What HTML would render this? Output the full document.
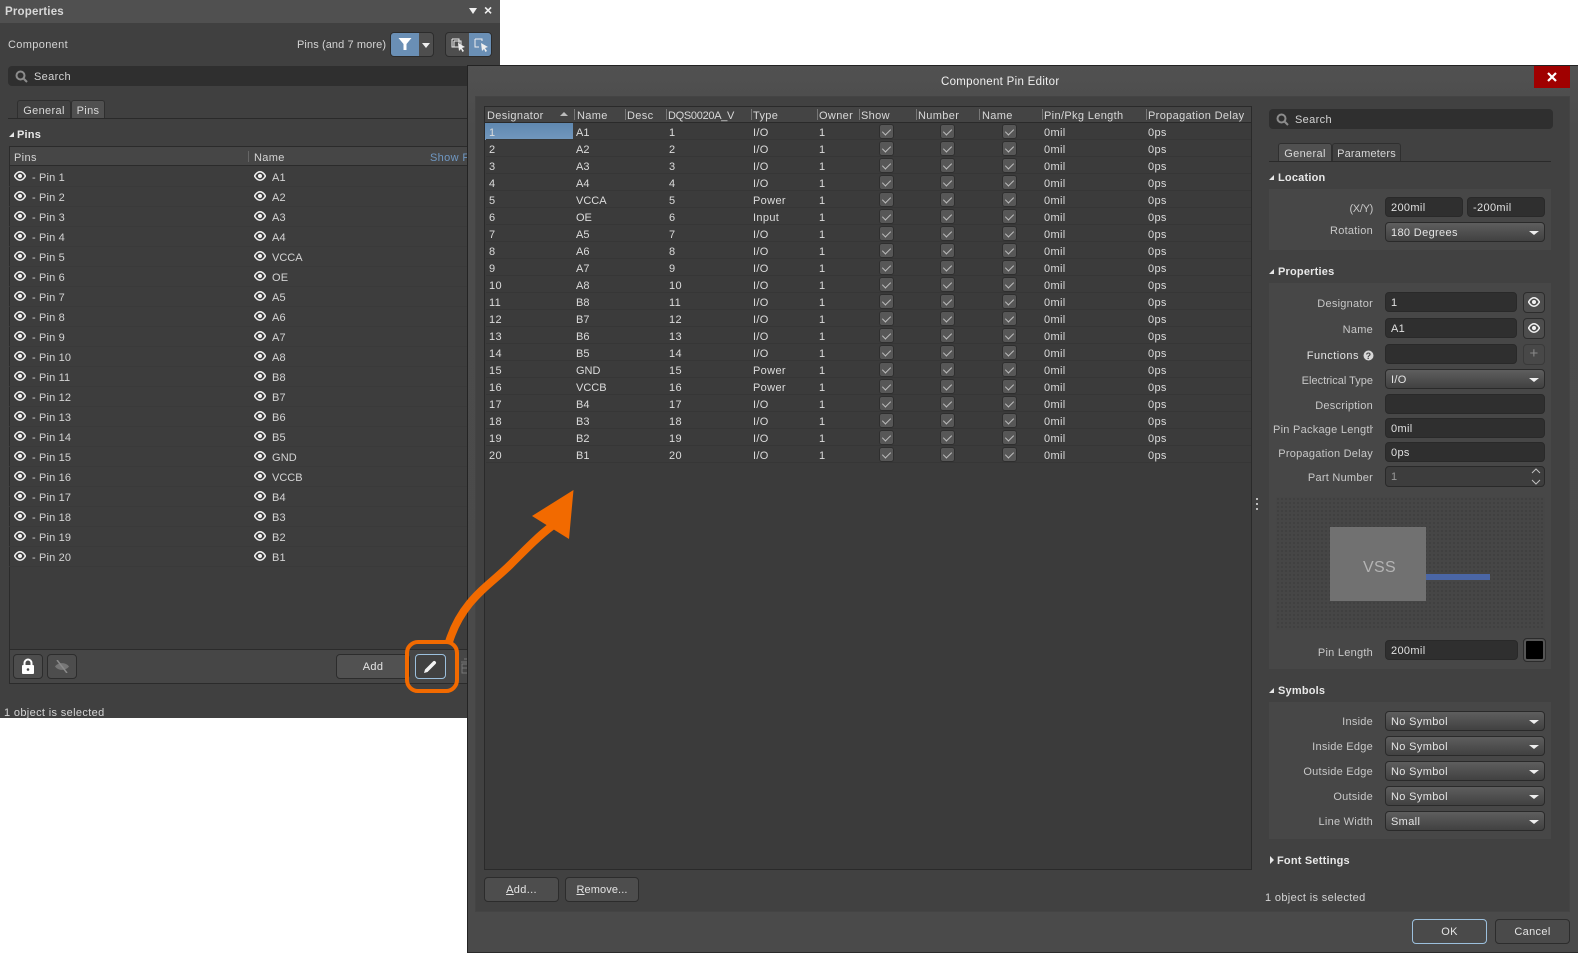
<!DOCTYPE html>
<html><head><meta charset="utf-8"><style>
*{box-sizing:border-box}
html,body{margin:0;padding:0;background:#fff}
body{width:1578px;height:953px;position:relative;overflow:hidden;font:11px "Liberation Sans",sans-serif;letter-spacing:.35px;color:#d4d4d4}
.a{position:absolute}
.tx{position:absolute;white-space:nowrap;line-height:14px;margin-top:1px}
.lb{position:absolute;white-space:nowrap;line-height:14px;right:205px;text-align:right;color:#c8c8c8;margin-top:1px;letter-spacing:.25px}
.b{font-weight:bold;color:#e8e8e8;letter-spacing:.2px}
.inp{position:absolute;background:#2f2f2f;border:1px solid #292929;border-radius:4px;height:20px;line-height:20px;padding-left:5px;color:#e0e0e0}
.dd{position:absolute;left:1385px;width:160px;height:20px;background:linear-gradient(#5e5e5e,#414141);border:1px solid #2a2a2a;border-radius:4px;line-height:21px;padding-left:5px;color:#e4e4e4}
.dd:after{content:"";position:absolute;right:5px;top:8px;border:5px solid transparent;border-top:4px solid #eee;border-bottom:0}
.btn{position:absolute;background:#4d4d4d;border:1px solid #2c2c2c;border-radius:4px;text-align:center;color:#e4e4e4}
.tab{position:absolute;border:1px solid #2f2f2f;border-bottom:0;border-radius:3px 3px 0 0;text-align:center;line-height:19px;color:#d8d8d8}
.tri{position:absolute;width:0;height:0;border-style:solid;border-width:0 0 5px 5px;border-color:transparent transparent #e6e6e6 transparent}
.lr{position:absolute;left:0;width:459px;height:20px;border-bottom:1px solid #3a3a3a}
.lr span{position:absolute;top:4px;line-height:14px;white-space:nowrap;color:#d4d4d4;letter-spacing:.15px}
.lr svg{position:absolute;top:4px;width:12px;height:10px}
.r{position:relative;height:17px;border-bottom:1px solid #363636}
.r span{position:absolute;top:3px;line-height:15px;white-space:nowrap;color:#dcdcdc}
.r .n0{left:3px}.r .n1{left:90px;letter-spacing:0}.r .n2{left:183px}.r .n3{left:267px}.r .n4{left:333px}.r .n5{left:558px}.r .n6{left:662px}
.r i{position:absolute;top:1px;width:15px;height:15px;background:#575757;border:1px solid #2e2e2e;border-radius:3px}
.r i:after{content:"";position:absolute;left:4px;top:2px;width:4px;height:7px;border:solid #bdbdbd;border-width:0 1px 1px 0;transform:rotate(45deg)}
.r .c1{left:393px}.r .c2{left:454px}.r .c3{left:516px}
.th{position:absolute;top:3px;line-height:15px;white-space:nowrap;color:#d8d8d8}
.sp{position:absolute;top:3px;width:1px;height:11px;background:#777}
</style></head><body>
<svg width="0" height="0" style="position:absolute"><defs>
<g id="eye"><path d="M.5 5C2.5 1.6 4.3.8 6 .8S9.5 1.6 11.5 5C9.5 8.4 7.7 9.2 6 9.2S2.5 8.4.5 5Z" fill="none" stroke="#f2f2f2" stroke-width="1.5"/><circle cx="6" cy="5" r="2" fill="#f2f2f2"/></g>
</defs></svg>

<!-- LEFT PANEL -->
<div class="a" style="left:0;top:0;width:500px;height:718px;background:#404040"></div>
<div class="a" style="left:0;top:0;width:500px;height:23px;background:#505050"></div>
<div class="tx b" style="left:5px;top:4px;font-size:11.500px;color:#d8d8d8">Properties</div>
<div class="a" style="left:469px;top:8px;border:4px solid transparent;border-top:6px solid #f0f0f0;border-bottom:0"></div>
<div class="tx" style="left:484px;top:2px;font-size:14px;font-weight:bold;color:#f0f0f0">×</div>
<div class="tx" style="left:8px;top:37px">Component</div>
<div class="tx" style="left:297px;top:37px;letter-spacing:.1px">Pins (and 7 more)</div>
<div class="a" style="left:390px;top:32px;width:44px;height:25px;background:#4e4e4e;border:1px solid #2c2c2c;border-radius:4px;overflow:hidden"><div class="a" style="left:0;top:0;width:28px;height:23px;background:#6a8fb5"></div>
<svg class="a" style="left:6px;top:4px" width="16" height="15"><path d="M1.500 1H14.500L9.500 7V13L6.500 13V7Z" fill="#fff"/></svg>
<div class="a" style="left:31px;top:10px;border:4px solid transparent;border-top:5px solid #eee;border-bottom:0"></div></div>
<div class="a" style="left:445px;top:32px;width:47px;height:25px;background:#4e4e4e;border:1px solid #2c2c2c;border-radius:4px;overflow:hidden"><div class="a" style="left:23px;top:0;width:23px;height:23px;background:#6a8fb5"></div>
<svg class="a" style="left:5px;top:5px" width="16" height="15"><path d="M1 1H8V3H10V9M3 3H8V9H1V1M3 3V9" fill="none" stroke="#eee"/><path d="M7 5L14 9L11 10L13 13L11.500 14L10 11L8 13Z" fill="#eee"/></svg>
<svg class="a" style="left:28px;top:5px" width="16" height="15"><path d="M1 1H8V3M1 1V9H5" fill="none" stroke="#eee"/><path d="M7 5L14 9L11 10L13 13L11.500 14L10 11L8 13Z" fill="#eee"/></svg></div>

<div class="a" style="left:8px;top:66px;width:470px;height:20px;background:#2f2f2f;border-radius:4px"></div>
<svg class="a" style="left:15px;top:70px" width="13" height="13"><circle cx="5.500" cy="5.500" r="4" fill="none" stroke="#8c8c8c" stroke-width="2"/><path d="M8.500 8.500L12 12" stroke="#8c8c8c" stroke-width="2"/></svg>
<div class="tx" style="left:34px;top:69px">Search</div>

<div class="a" style="left:8px;top:118px;width:460px;height:1px;background:#2a2a2a"></div>
<div class="tab" style="left:17px;top:100px;width:54px;height:18px;background:#414141;line-height:20px">General</div>
<div class="tab" style="left:71px;top:100px;width:34px;height:18px;background:#505050;line-height:20px">Pins</div>
<div class="tri" style="left:9px;top:132px"></div>
<div class="tx b" style="left:17px;top:127px">Pins</div>

<div class="a" style="left:9px;top:146px;width:459px;height:537px;background:#3d3d3d;border:1px solid #2b2b2b;border-right:0"></div>
<div class="a" style="left:10px;top:147px;width:458px;height:19px;background:#464646;border-bottom:1px solid #2b2b2b"></div>
<div class="tx" style="left:14px;top:150px">Pins</div>
<div class="a" style="left:248px;top:151px;width:1px;height:11px;background:#666"></div>
<div class="tx" style="left:254px;top:150px">Name</div>
<div class="tx" style="left:430px;top:150px;color:#6f97c2">Show F</div>

<div class="a" style="left:9px;top:167px;width:459px;height:400px">
<div class="lr" style="top:0"><svg style="left:5px"><use href="#eye"/></svg><span style="left:23px">- Pin 1</span><svg style="left:245px"><use href="#eye"/></svg><span style="left:263px">A1</span></div>
<div class="lr" style="top:20px"><svg style="left:5px"><use href="#eye"/></svg><span style="left:23px">- Pin 2</span><svg style="left:245px"><use href="#eye"/></svg><span style="left:263px">A2</span></div>
<div class="lr" style="top:40px"><svg style="left:5px"><use href="#eye"/></svg><span style="left:23px">- Pin 3</span><svg style="left:245px"><use href="#eye"/></svg><span style="left:263px">A3</span></div>
<div class="lr" style="top:60px"><svg style="left:5px"><use href="#eye"/></svg><span style="left:23px">- Pin 4</span><svg style="left:245px"><use href="#eye"/></svg><span style="left:263px">A4</span></div>
<div class="lr" style="top:80px"><svg style="left:5px"><use href="#eye"/></svg><span style="left:23px">- Pin 5</span><svg style="left:245px"><use href="#eye"/></svg><span style="left:263px;letter-spacing:0">VCCA</span></div>
<div class="lr" style="top:100px"><svg style="left:5px"><use href="#eye"/></svg><span style="left:23px">- Pin 6</span><svg style="left:245px"><use href="#eye"/></svg><span style="left:263px">OE</span></div>
<div class="lr" style="top:120px"><svg style="left:5px"><use href="#eye"/></svg><span style="left:23px">- Pin 7</span><svg style="left:245px"><use href="#eye"/></svg><span style="left:263px">A5</span></div>
<div class="lr" style="top:140px"><svg style="left:5px"><use href="#eye"/></svg><span style="left:23px">- Pin 8</span><svg style="left:245px"><use href="#eye"/></svg><span style="left:263px">A6</span></div>
<div class="lr" style="top:160px"><svg style="left:5px"><use href="#eye"/></svg><span style="left:23px">- Pin 9</span><svg style="left:245px"><use href="#eye"/></svg><span style="left:263px">A7</span></div>
<div class="lr" style="top:180px"><svg style="left:5px"><use href="#eye"/></svg><span style="left:23px">- Pin 10</span><svg style="left:245px"><use href="#eye"/></svg><span style="left:263px">A8</span></div>
<div class="lr" style="top:200px"><svg style="left:5px"><use href="#eye"/></svg><span style="left:23px">- Pin 11</span><svg style="left:245px"><use href="#eye"/></svg><span style="left:263px">B8</span></div>
<div class="lr" style="top:220px"><svg style="left:5px"><use href="#eye"/></svg><span style="left:23px">- Pin 12</span><svg style="left:245px"><use href="#eye"/></svg><span style="left:263px">B7</span></div>
<div class="lr" style="top:240px"><svg style="left:5px"><use href="#eye"/></svg><span style="left:23px">- Pin 13</span><svg style="left:245px"><use href="#eye"/></svg><span style="left:263px">B6</span></div>
<div class="lr" style="top:260px"><svg style="left:5px"><use href="#eye"/></svg><span style="left:23px">- Pin 14</span><svg style="left:245px"><use href="#eye"/></svg><span style="left:263px">B5</span></div>
<div class="lr" style="top:280px"><svg style="left:5px"><use href="#eye"/></svg><span style="left:23px">- Pin 15</span><svg style="left:245px"><use href="#eye"/></svg><span style="left:263px">GND</span></div>
<div class="lr" style="top:300px"><svg style="left:5px"><use href="#eye"/></svg><span style="left:23px">- Pin 16</span><svg style="left:245px"><use href="#eye"/></svg><span style="left:263px;letter-spacing:0">VCCB</span></div>
<div class="lr" style="top:320px"><svg style="left:5px"><use href="#eye"/></svg><span style="left:23px">- Pin 17</span><svg style="left:245px"><use href="#eye"/></svg><span style="left:263px">B4</span></div>
<div class="lr" style="top:340px"><svg style="left:5px"><use href="#eye"/></svg><span style="left:23px">- Pin 18</span><svg style="left:245px"><use href="#eye"/></svg><span style="left:263px">B3</span></div>
<div class="lr" style="top:360px"><svg style="left:5px"><use href="#eye"/></svg><span style="left:23px">- Pin 19</span><svg style="left:245px"><use href="#eye"/></svg><span style="left:263px">B2</span></div>
<div class="lr" style="top:380px"><svg style="left:5px"><use href="#eye"/></svg><span style="left:23px">- Pin 20</span><svg style="left:245px"><use href="#eye"/></svg><span style="left:263px">B1</span></div>
</div>

<div class="a" style="left:9px;top:649px;width:459px;height:35px;background:#464646;border:1px solid #2b2b2b;border-right:0"></div>
<div class="btn" style="left:13px;top:654px;width:30px;height:25px"></div>
<svg class="a" style="left:20px;top:658px" width="16" height="17"><path d="M4.500 8V5A3.500 3.500 0 0 1 11.500 5V8" fill="none" stroke="#fff" stroke-width="2"/><rect x="2" y="7" width="12" height="9" rx="1" fill="#fff"/><circle cx="8" cy="11.500" r="1.300" fill="#444"/></svg>
<div class="btn" style="left:47px;top:654px;width:30px;height:25px"></div>
<svg class="a" style="left:54px;top:660px" width="16" height="13"><path d="M1 6.500C4 2 12 2 15 6.500C12 11 4 11 1 6.500Z" fill="#767676"/><path d="M3 0L13 13" stroke="#8a8a8a" stroke-width="1.500"/></svg>
<div class="btn" style="left:336px;top:654px;width:74px;height:25px;line-height:25px;background:#515151">Add</div>
<div class="btn" style="left:415px;top:654px;width:31px;height:25px;background:#414141;border-color:#9cc0dd"></div>
<svg class="a" style="left:423px;top:659px" width="15" height="15"><path d="M1 14L2 10.500L10 2.500A1.500 1.500 0 0 1 12.500 5L4.500 13Z" fill="#f4f4f4"/></svg>
<svg class="a" style="left:461px;top:657px" width="7" height="18"><path d="M0 5H7M1 7H7V16H1ZM1 11H7M3 2H7" stroke="#777" fill="none"/></svg>
<div class="tx" style="left:4px;top:705px">1 object is selected</div>

<!-- DIALOG -->
<div class="a" style="left:467px;top:65px;width:1111px;height:888px;background:linear-gradient(#515151,#4b4b4b 60px,#4a4a4a);border:1px solid #232323;border-right:0;border-bottom:1px solid #2a2a2a"></div>
<div class="tx" style="left:941px;top:74px;font-size:11.500px;color:#f0f0f0;letter-spacing:.3px">Component Pin Editor</div>
<div class="a" style="left:1534px;top:66px;width:36px;height:22px;background:#a00000"></div>
<svg class="a" style="left:1547px;top:72px" width="10" height="10"><path d="M1 1L9 9M9 1L1 9" stroke="#fff" stroke-width="2.200"/></svg>
<div class="a" style="left:475px;top:96px;width:1095px;height:816px;background:#414141;border:1px solid #444"></div>

<!-- table -->
<div class="a" style="left:484px;top:106px;width:768px;height:764px;background:#3b3b3b;border:1px solid #2a2a2a"></div>
<div class="a" style="left:485px;top:107px;width:766px;height:16px;background:#444;border-bottom:1px solid #2a2a2a"></div>
<div class="a" style="left:486px;top:106px;width:765px;height:17px">
<span class="th" style="left:1px">Designator</span>
<div class="a" style="left:74px;top:6px;border:4px solid transparent;border-bottom:4px solid #bbb;border-top:0"></div>
<div class="sp" style="left:88px"></div><span class="th" style="left:91px">Name</span>
<div class="sp" style="left:139px"></div><span class="th" style="left:141px">Desc</span>
<div class="sp" style="left:180px"></div><span class="th" style="left:182px;letter-spacing:-.3px">DQS0020A_V</span>
<div class="sp" style="left:265px"></div><span class="th" style="left:267px">Type</span>
<div class="sp" style="left:331px"></div><span class="th" style="left:333px">Owner</span>
<div class="sp" style="left:373px"></div><span class="th" style="left:375px">Show</span>
<div class="sp" style="left:430px"></div><span class="th" style="left:432px">Number</span>
<div class="sp" style="left:493px"></div><span class="th" style="left:496px">Name</span>
<div class="sp" style="left:556px"></div><span class="th" style="left:558px">Pin/Pkg Length</span>
<div class="sp" style="left:660px"></div><span class="th" style="left:662px">Propagation Delay</span>
</div>
<div class="a" style="left:485px;top:123px;width:88px;height:17px;background:linear-gradient(#5f88b0,#7297bd)"></div>
<div class="a" style="left:486px;top:123px;width:765px">
<div class="r"><span class="n0">1</span><span class="n1">A1</span><span class="n2">1</span><span class="n3">I/O</span><span class="n4">1</span><i class="c1"></i><i class="c2"></i><i class="c3"></i><span class="n5">0mil</span><span class="n6">0ps</span></div>
<div class="r"><span class="n0">2</span><span class="n1">A2</span><span class="n2">2</span><span class="n3">I/O</span><span class="n4">1</span><i class="c1"></i><i class="c2"></i><i class="c3"></i><span class="n5">0mil</span><span class="n6">0ps</span></div>
<div class="r"><span class="n0">3</span><span class="n1">A3</span><span class="n2">3</span><span class="n3">I/O</span><span class="n4">1</span><i class="c1"></i><i class="c2"></i><i class="c3"></i><span class="n5">0mil</span><span class="n6">0ps</span></div>
<div class="r"><span class="n0">4</span><span class="n1">A4</span><span class="n2">4</span><span class="n3">I/O</span><span class="n4">1</span><i class="c1"></i><i class="c2"></i><i class="c3"></i><span class="n5">0mil</span><span class="n6">0ps</span></div>
<div class="r"><span class="n0">5</span><span class="n1">VCCA</span><span class="n2">5</span><span class="n3">Power</span><span class="n4">1</span><i class="c1"></i><i class="c2"></i><i class="c3"></i><span class="n5">0mil</span><span class="n6">0ps</span></div>
<div class="r"><span class="n0">6</span><span class="n1">OE</span><span class="n2">6</span><span class="n3">Input</span><span class="n4">1</span><i class="c1"></i><i class="c2"></i><i class="c3"></i><span class="n5">0mil</span><span class="n6">0ps</span></div>
<div class="r"><span class="n0">7</span><span class="n1">A5</span><span class="n2">7</span><span class="n3">I/O</span><span class="n4">1</span><i class="c1"></i><i class="c2"></i><i class="c3"></i><span class="n5">0mil</span><span class="n6">0ps</span></div>
<div class="r"><span class="n0">8</span><span class="n1">A6</span><span class="n2">8</span><span class="n3">I/O</span><span class="n4">1</span><i class="c1"></i><i class="c2"></i><i class="c3"></i><span class="n5">0mil</span><span class="n6">0ps</span></div>
<div class="r"><span class="n0">9</span><span class="n1">A7</span><span class="n2">9</span><span class="n3">I/O</span><span class="n4">1</span><i class="c1"></i><i class="c2"></i><i class="c3"></i><span class="n5">0mil</span><span class="n6">0ps</span></div>
<div class="r"><span class="n0">10</span><span class="n1">A8</span><span class="n2">10</span><span class="n3">I/O</span><span class="n4">1</span><i class="c1"></i><i class="c2"></i><i class="c3"></i><span class="n5">0mil</span><span class="n6">0ps</span></div>
<div class="r"><span class="n0">11</span><span class="n1">B8</span><span class="n2">11</span><span class="n3">I/O</span><span class="n4">1</span><i class="c1"></i><i class="c2"></i><i class="c3"></i><span class="n5">0mil</span><span class="n6">0ps</span></div>
<div class="r"><span class="n0">12</span><span class="n1">B7</span><span class="n2">12</span><span class="n3">I/O</span><span class="n4">1</span><i class="c1"></i><i class="c2"></i><i class="c3"></i><span class="n5">0mil</span><span class="n6">0ps</span></div>
<div class="r"><span class="n0">13</span><span class="n1">B6</span><span class="n2">13</span><span class="n3">I/O</span><span class="n4">1</span><i class="c1"></i><i class="c2"></i><i class="c3"></i><span class="n5">0mil</span><span class="n6">0ps</span></div>
<div class="r"><span class="n0">14</span><span class="n1">B5</span><span class="n2">14</span><span class="n3">I/O</span><span class="n4">1</span><i class="c1"></i><i class="c2"></i><i class="c3"></i><span class="n5">0mil</span><span class="n6">0ps</span></div>
<div class="r"><span class="n0">15</span><span class="n1">GND</span><span class="n2">15</span><span class="n3">Power</span><span class="n4">1</span><i class="c1"></i><i class="c2"></i><i class="c3"></i><span class="n5">0mil</span><span class="n6">0ps</span></div>
<div class="r"><span class="n0">16</span><span class="n1">VCCB</span><span class="n2">16</span><span class="n3">Power</span><span class="n4">1</span><i class="c1"></i><i class="c2"></i><i class="c3"></i><span class="n5">0mil</span><span class="n6">0ps</span></div>
<div class="r"><span class="n0">17</span><span class="n1">B4</span><span class="n2">17</span><span class="n3">I/O</span><span class="n4">1</span><i class="c1"></i><i class="c2"></i><i class="c3"></i><span class="n5">0mil</span><span class="n6">0ps</span></div>
<div class="r"><span class="n0">18</span><span class="n1">B3</span><span class="n2">18</span><span class="n3">I/O</span><span class="n4">1</span><i class="c1"></i><i class="c2"></i><i class="c3"></i><span class="n5">0mil</span><span class="n6">0ps</span></div>
<div class="r"><span class="n0">19</span><span class="n1">B2</span><span class="n2">19</span><span class="n3">I/O</span><span class="n4">1</span><i class="c1"></i><i class="c2"></i><i class="c3"></i><span class="n5">0mil</span><span class="n6">0ps</span></div>
<div class="r"><span class="n0">20</span><span class="n1">B1</span><span class="n2">20</span><span class="n3">I/O</span><span class="n4">1</span><i class="c1"></i><i class="c2"></i><i class="c3"></i><span class="n5">0mil</span><span class="n6">0ps</span></div>
</div>

<div class="btn" style="left:484px;top:877px;width:75px;height:25px;line-height:25px"><u>A</u>dd...</div>
<div class="btn" style="left:565px;top:877px;width:74px;height:25px;line-height:25px;letter-spacing:.1px"><u>R</u>emove...</div>

<!-- grip -->
<div class="a" style="left:1256px;top:498px;width:2px;height:2px;background:#bbb"></div>
<div class="a" style="left:1256px;top:503px;width:2px;height:2px;background:#bbb"></div>
<div class="a" style="left:1256px;top:508px;width:2px;height:2px;background:#bbb"></div>

<!-- right side -->
<div class="a" style="left:1269px;top:109px;width:284px;height:20px;background:#2f2f2f;border-radius:4px"></div>
<svg class="a" style="left:1276px;top:113px" width="13" height="13"><circle cx="5.500" cy="5.500" r="4" fill="none" stroke="#8c8c8c" stroke-width="2"/><path d="M8.500 8.500L12 12" stroke="#8c8c8c" stroke-width="2"/></svg>
<div class="tx" style="left:1295px;top:112px">Search</div>
<div class="a" style="left:1269px;top:161px;width:282px;height:1px;background:#2a2a2a"></div>
<div class="tab" style="left:1278px;top:143px;width:54px;height:18px;background:#505050;line-height:21px">General</div>
<div class="tab" style="left:1332px;top:143px;width:69px;height:18px;background:#414141;line-height:21px;letter-spacing:.2px">Parameters</div>

<div class="tri" style="left:1269px;top:175px"></div>
<div class="tx b" style="left:1278px;top:170px">Location</div>
<div class="a" style="left:1269px;top:189px;width:282px;height:61px;background:#474747"></div>
<div class="lb" style="top:201px;letter-spacing:-.3px">(X/Y)</div>
<div class="inp" style="left:1385px;top:197px;width:78px">200mil</div>
<div class="inp" style="left:1467px;top:197px;width:78px">-200mil</div>
<div class="lb" style="top:223px">Rotation</div>
<div class="dd" style="top:222px">180 Degrees</div>

<div class="tri" style="left:1269px;top:269px"></div>
<div class="tx b" style="left:1278px;top:264px">Properties</div>
<div class="a" style="left:1269px;top:283px;width:282px;height:386px;background:#474747"></div>
<div class="lb" style="top:296px">Designator</div>
<div class="inp" style="left:1385px;top:292px;width:132px">1</div>
<div class="btn" style="left:1523px;top:292px;width:22px;height:21px"></div>
<svg class="a" style="left:1528px;top:297px;width:12px;height:10px"><use href="#eye"/></svg>
<div class="lb" style="top:322px">Name</div>
<div class="inp" style="left:1385px;top:318px;width:132px">A1</div>
<div class="btn" style="left:1523px;top:318px;width:22px;height:21px"></div>
<svg class="a" style="left:1528px;top:323px;width:12px;height:10px"><use href="#eye"/></svg>
<div class="lb" style="top:348px;right:219px;color:#e4e4e4;letter-spacing:.5px">Functions</div>
<svg class="a" style="left:1363px;top:350px" width="11" height="11"><circle cx="5.500" cy="5.500" r="5" fill="#d8d8d8"/><text x="5.500" y="9" font-size="9" font-weight="bold" text-anchor="middle" fill="#444" font-family="Liberation Sans">?</text></svg>
<div class="inp" style="left:1385px;top:344px;width:132px"></div>
<div class="btn" style="left:1523px;top:344px;width:22px;height:21px;background:#484848;border-color:#3a3a3a;color:#888;font-size:15px;line-height:18px">+</div>
<div class="lb" style="top:373px;letter-spacing:0">Electrical Type</div>
<div class="dd" style="top:369px">I/O</div>
<div class="lb" style="top:398px">Description</div>
<div class="inp" style="left:1385px;top:394px;width:160px"></div>
<div class="a" style="left:1273px;top:422px;width:100px;height:16px;overflow:hidden"><div class="tx" style="right:-3px;top:0;color:#c8c8c8;letter-spacing:.25px">Pin Package Length</div></div>
<div class="inp" style="left:1385px;top:418px;width:160px">0mil</div>
<div class="lb" style="top:446px">Propagation Delay</div>
<div class="inp" style="left:1385px;top:442px;width:160px">0ps</div>
<div class="lb" style="top:470px">Part Number</div>
<div class="inp" style="left:1385px;top:466px;width:160px;background:#3d3d3d;color:#9a9a9a;height:21px;line-height:20px">1</div>
<svg class="a" style="left:1531px;top:468px" width="10" height="17"><path d="M1 5L5 1L9 5M1 12L5 16L9 12" fill="none" stroke="#c0c0c0"/></svg>

<div class="a" style="left:1276px;top:497px;width:269px;height:133px;background-color:#464646;background-image:radial-gradient(#404040 1px,transparent 1.200px);background-size:4px 4px"></div>
<div class="a" style="left:1330px;top:527px;width:96px;height:74px;background:#717171"></div>
<div class="tx" style="left:1363px;top:558px;font-size:16px;line-height:18px;color:#b4b4b4;letter-spacing:.3px">VSS</div>
<div class="a" style="left:1426px;top:574px;width:64px;height:6px;background:#4a66a6"></div>
<div class="lb" style="top:645px">Pin Length</div>
<div class="inp" style="left:1385px;top:640px;width:133px">200mil</div>
<div class="a" style="left:1524px;top:639px;width:21px;height:22px;background:#000;border:2px solid #555;outline:1px solid #2b2b2b;border-radius:3px"></div>

<div class="tri" style="left:1269px;top:688px"></div>
<div class="tx b" style="left:1278px;top:683px">Symbols</div>
<div class="a" style="left:1269px;top:702px;width:282px;height:137px;background:#474747"></div>
<div class="lb" style="top:714px">Inside</div>
<div class="dd" style="top:711px">No Symbol</div>
<div class="lb" style="top:739px">Inside Edge</div>
<div class="dd" style="top:736px">No Symbol</div>
<div class="lb" style="top:764px">Outside Edge</div>
<div class="dd" style="top:761px">No Symbol</div>
<div class="lb" style="top:789px">Outside</div>
<div class="dd" style="top:786px">No Symbol</div>
<div class="lb" style="top:814px">Line Width</div>
<div class="dd" style="top:811px">Small</div>

<div class="a" style="left:1270px;top:856px;border:4px solid transparent;border-left:4px solid #e6e6e6;border-right:0"></div>
<div class="tx b" style="left:1277px;top:853px">Font Settings</div>
<div class="tx" style="left:1265px;top:890px">1 object is selected</div>

<div class="btn" style="left:1412px;top:919px;width:75px;height:25px;line-height:25px;background:#4a4a4a;border-color:#9cc0dd">OK</div>
<div class="btn" style="left:1495px;top:919px;width:75px;height:25px;line-height:25px;background:#4a4a4a">Cancel</div>

<!-- orange annotation -->
<svg class="a" style="left:0;top:0" width="1578" height="953">
<path d="M449 642C462 600 490 585 510 565S540 535 552 526" fill="none" stroke="#f26a00" stroke-width="8"/>
<path d="M573.500 490L532 516L569 539Z" fill="#f26a00"/>
<rect x="407" y="642" width="50" height="49" rx="11" fill="none" stroke="#f26a00" stroke-width="4"/>
</svg>
</body></html>
